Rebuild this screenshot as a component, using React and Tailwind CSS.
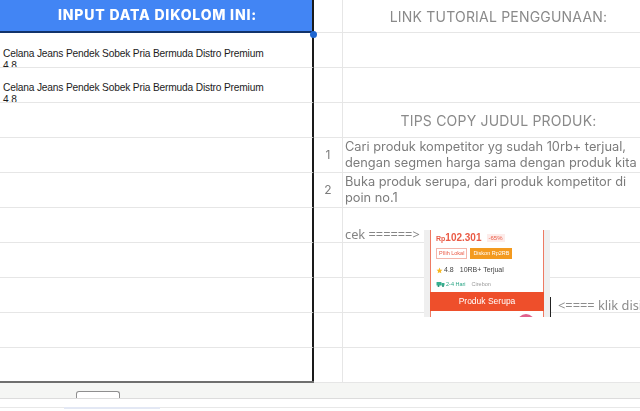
import React from "react";

const rowHeights = [33, 35, 35, 35, 35, 35, 35, 35, 35, 35, 35];

const leftText = {
  1: "Celana Jeans Pendek Sobek Pria Bermuda Distro Premium",
  2: "Celana Jeans Pendek Sobek Pria Bermuda Distro Premium",
};

const Heading = ({ children }) => (
  <div className="h-full flex items-center justify-center pl-[14px] font-['Inter',sans-serif] text-[14px] tracking-[0.2px] text-[#8a8a8a] blur-[0.3px] whitespace-nowrap">
    {children}
  </div>
);

const Tip = ({ children }) => (
  <div className="h-full pl-[2px] pt-[1px] font-['Inter',sans-serif] text-[12.8px] leading-[16px] text-[#7c7c7c] whitespace-nowrap blur-[0.3px]">
    {children}
  </div>
);

const rightCells = {
  0: <Heading>LINK TUTORIAL PENGGUNAAN:</Heading>,
  3: <Heading>TIPS COPY JUDUL PRODUK:</Heading>,
  4: (
    <Tip>
      Cari produk kompetitor yg sudah 10rb+ terjual,
      <br />
      dengan segmen harga sama dengan produk kita
    </Tip>
  ),
  5: (
    <Tip>
      Buka produk serupa, dari produk kompetitor di
      <br />
      poin no.1
    </Tip>
  ),
  6: (
    <div className="pl-[2px] pt-[18px] font-['Noto_Sans',sans-serif] text-[12.8px] leading-[16px] text-[#858585] blur-[0.3px] whitespace-nowrap">
      cek ======&gt;
    </div>
  ),
};

const numbers = { 4: "1", 5: "2" };

const ProductCard = () => (
  <div className="absolute left-[424px] top-[230px] w-[126px] h-[87px] bg-[#efefef] px-[6px] overflow-hidden blur-[0.4px]">
    <div className="h-full bg-white border-x border-[#ee7a63] flex flex-col font-['Liberation_Sans',sans-serif]">
      <div className="flex items-center gap-[5px] pl-[5px] h-[16px] text-[#ea5a45]">
        <span className="text-[10px] font-bold leading-none">
          <span className="text-[7px]">Rp</span>102.301
        </span>
        <span className="bg-[#fdecea] text-[6px] leading-[8px] px-[2px]">-65%</span>
      </div>
      <div className="flex gap-[3px] pl-[5px] mt-[2px]">
        <span className="border border-[#f4b5aa] text-[#ea5a45] text-[5.5px] leading-[7px] px-[2px] py-[1px]">PIlih Lokal</span>
        <span className="bg-[#f39a1f] text-white text-[5.5px] leading-[7px] px-[3px] py-[2px]">Diskon Rp2RB</span>
      </div>
      <div className="flex items-center pl-[5px] mt-[5px] h-[12px] text-[#444444] text-[7px]">
        <svg width="7" height="7" viewBox="0 0 24 24" className="mr-[1px]">
          <path d="M12 2l3 7 7 .6-5.300 4.700 1.600 7.200L12 17.800 5.700 21.500l1.600-7.200L2 9.600 9 9z" fill="#f7b820" />
        </svg>
        <span>4.8</span>
        <span className="ml-[6px]">10RB+ Terjual</span>
      </div>
      <div className="flex items-center pl-[5px] mt-[3px] h-[10px] text-[5.5px]">
        <svg width="9" height="6" viewBox="0 0 18 12" className="mr-[1px]">
          <rect x="1" y="2" width="10" height="7" rx="1" fill="#35b08f" />
          <rect x="11" y="4" width="6" height="5" rx="1" fill="#35b08f" />
          <circle cx="5" cy="10" r="2" fill="#1f8f72" />
          <circle cx="14" cy="10" r="2" fill="#1f8f72" />
        </svg>
        <span className="text-[#2aa585]">2-4 Hari</span>
        <span className="ml-[6px] text-[#9a9a9a]">Cirebon</span>
      </div>
      <div className="-mx-[1px] mt-[3px] h-[19px] bg-[#ee4f2b] text-white text-[8.5px] flex items-center justify-center">
        Produk Serupa
      </div>
      <div className="relative flex-1">
        <div className="absolute left-[86px] top-[3px] w-[18px] h-[18px] rounded-full bg-[#e0608c]" />
      </div>
    </div>
  </div>
);

export default function App() {
  return (
    <div className="relative w-[640px] h-[411px] overflow-hidden bg-white">
      <div className="flex flex-col">
        {rowHeights.map((h, i) => (
          <div key={i} className="flex" style={{ height: h }}>
            <div
              className={
                i === 0
                  ? "w-[314px] shrink-0 bg-[#4285f4] border-b-2 border-b-[#12336b] border-r-2 border-r-[#1a1a1a] flex items-center justify-center pb-[2px] pl-[3px] font-['Inter',sans-serif] font-extrabold text-[14px] tracking-[0.8px] text-white blur-[0.2px] whitespace-nowrap"
                  : "w-[314px] shrink-0 border-b border-b-[#e6e6e6] border-r-2 border-r-[#1a1a1a] overflow-hidden"
              }
            >
              {i === 0 && "INPUT DATA DIKOLOM INI:"}
              {leftText[i] && (
                <div
                  className={
                    (i === 1 ? "pt-[15px]" : "pt-[14px]") +
                    " pl-[3px] font-['Liberation_Sans',sans-serif] text-[10.2px] tracking-[-0.17px] leading-[12px] text-[#1c1c1c] whitespace-nowrap"
                  }
                >
                  {leftText[i]}
                  <br />
                  4.8
                </div>
              )}
            </div>
            <div className="w-[29px] shrink-0 border-r border-r-[#e6e6e6] border-b border-b-[#e6e6e6] flex items-center justify-center font-['Inter',sans-serif] text-[12px] text-[#7c7c7c] blur-[0.3px]">
              {numbers[i]}
            </div>
            <div className="flex-1 min-w-0 border-b border-b-[#e6e6e6] overflow-hidden">{rightCells[i]}</div>
          </div>
        ))}
      </div>

      <div className="flex flex-col">
        <div className="h-[16px] bg-[#f5f6f4] border-b border-b-[#dcdcdc] pl-[76px] flex items-end">
          <div className="w-[44px] h-[7px] bg-white border border-b-0 border-[#8f8f8f] rounded-t-[3px]" />
        </div>
        <div className="h-[8px] bg-white" />
        <div className="h-[1px] bg-[#e8e8e8] pl-[64px]">
          <div className="w-[96px] h-[2px] bg-[#e3e8f4]" />
        </div>
      </div>

      <div className="absolute left-0 top-[381px] w-[314px] h-[2px] bg-[#6f6f6f]" />
      <div className="absolute left-[310px] top-[31px] w-[7px] h-[7px] rounded-full bg-[#1f66d1]" />

      <ProductCard />

      <div className="absolute left-[550px] top-[297px] w-[1px] h-[20px] bg-[#222222]" />
      <div className="absolute left-[558px] top-[296px] font-['Noto_Sans',sans-serif] text-[12.8px] leading-[18px] text-[#8c8c8c] whitespace-nowrap blur-[0.3px]">
        &lt;==== klik disini
      </div>
    </div>
  );
}
